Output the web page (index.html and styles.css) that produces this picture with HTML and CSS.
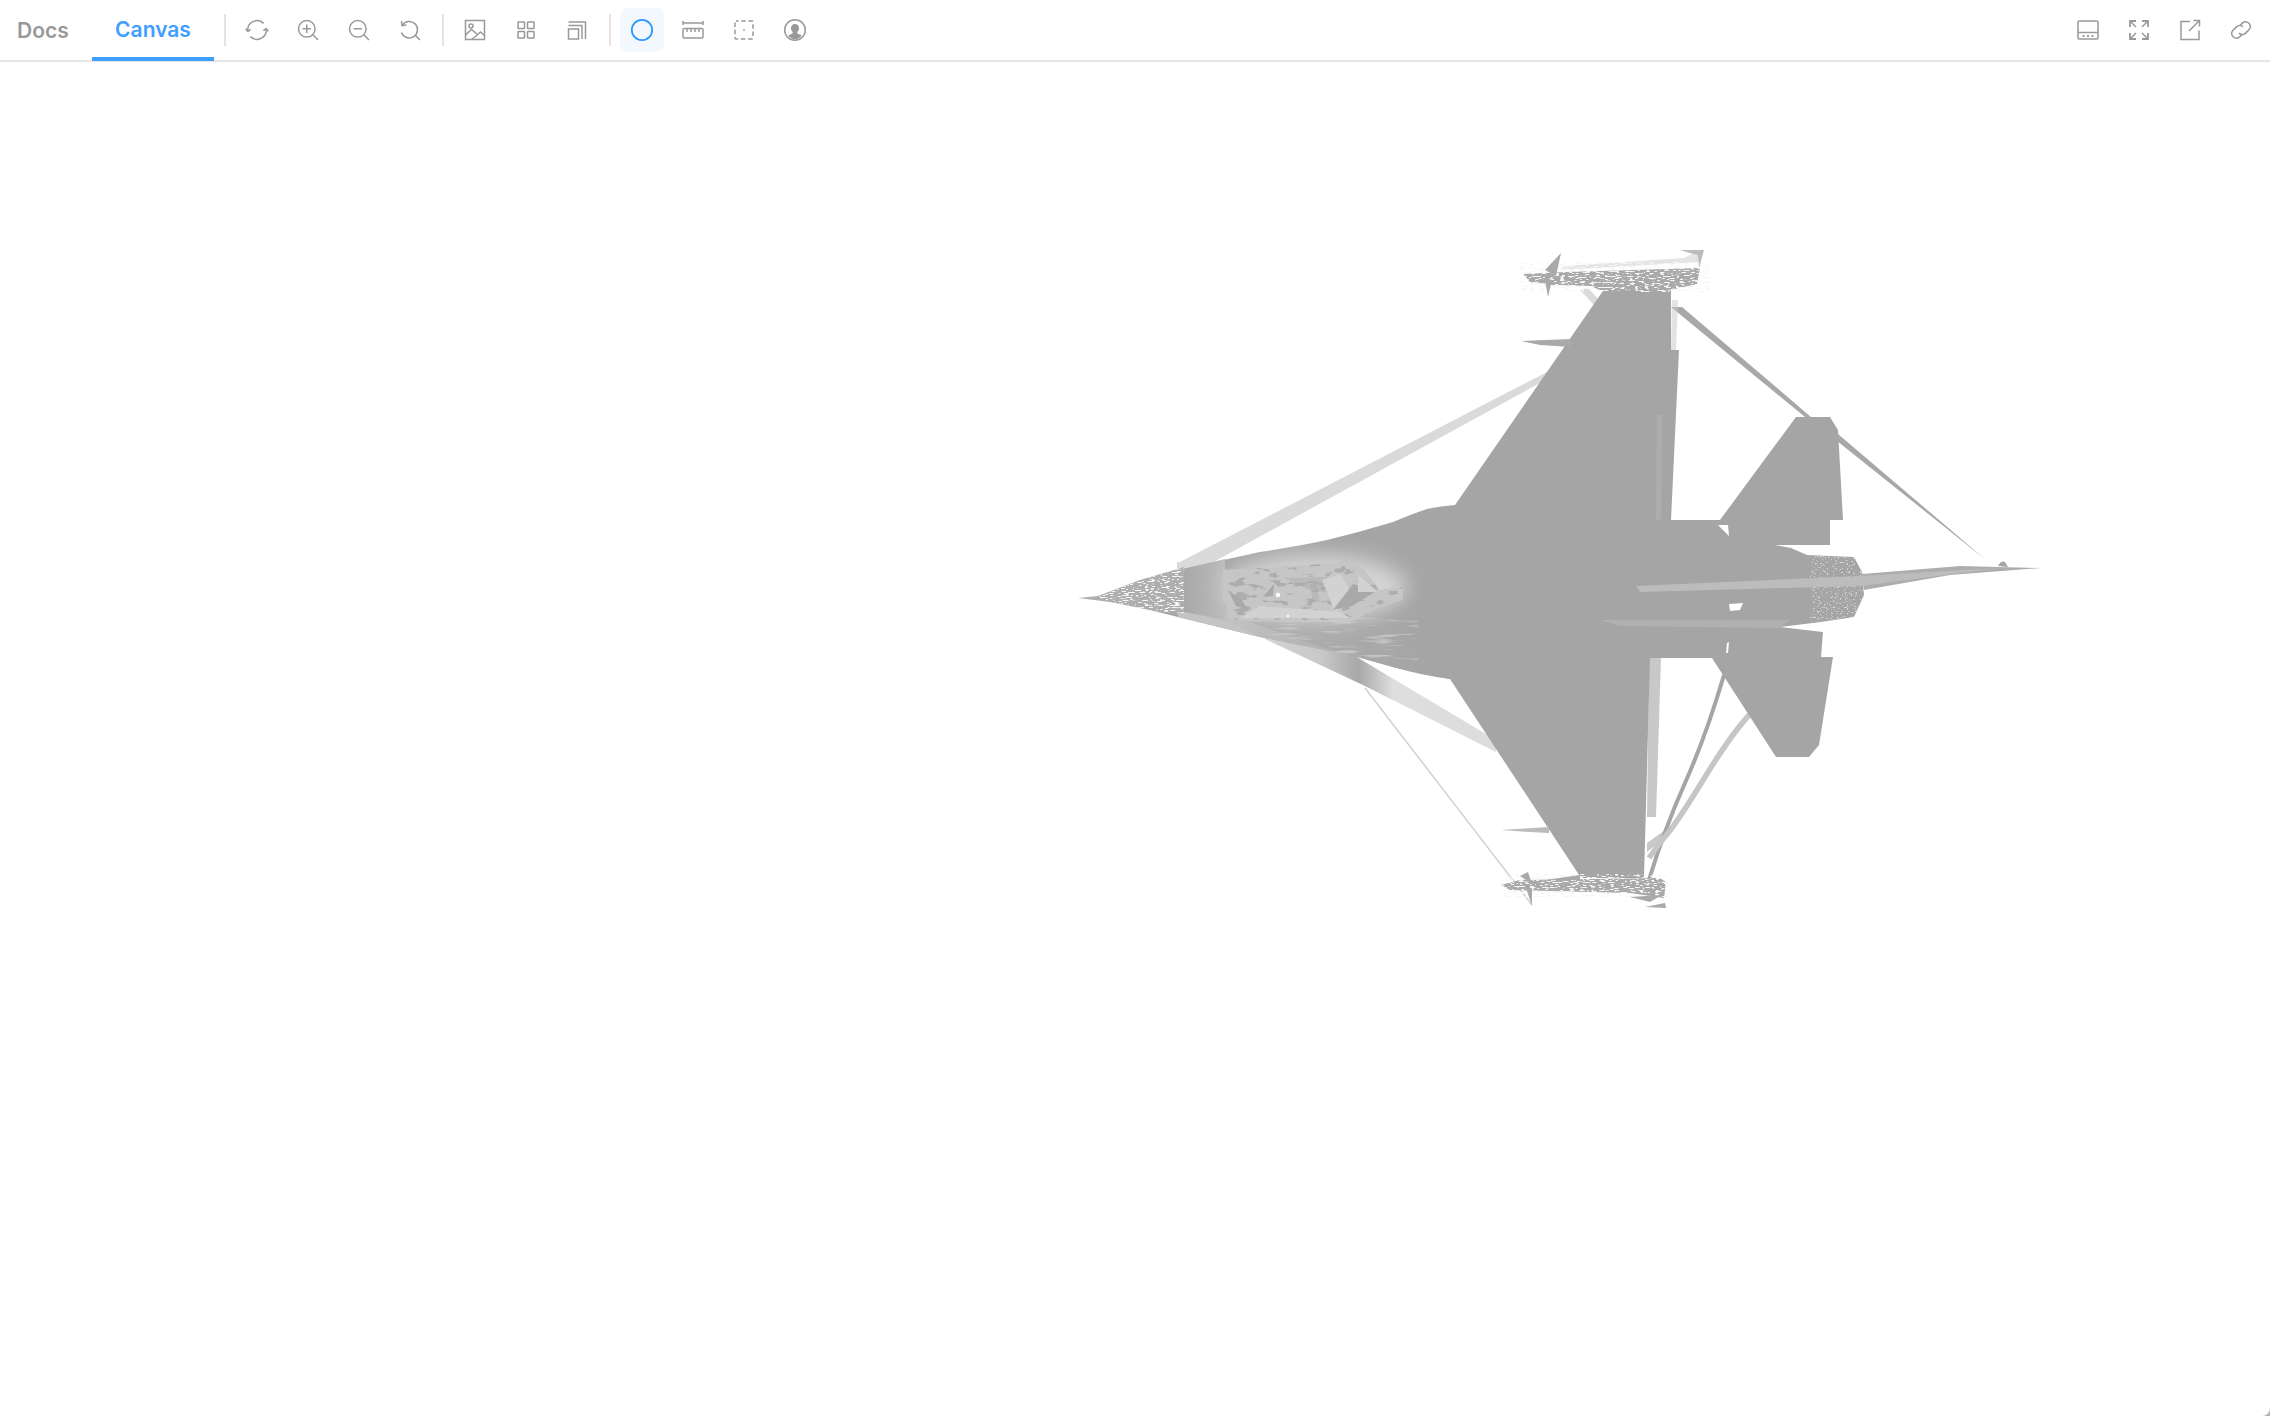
FILE: index.html
```html
<!DOCTYPE html>
<html lang="en">
<head>
<meta charset="utf-8">
<title>Canvas</title>
<link rel="stylesheet" href="styles.css">
</head>
<body>
<div class="app">
  <header class="toolbar">
    <nav class="tabs">
      <a class="tab tab-docs">Docs</a>
      <a class="tab tab-active">Canvas</a>
    </nav>
    <span class="divider"></span>
    <div class="group">
      <button class="btn"><svg class="icon" viewBox="0 0 24 24"><path d="M2.800 13A9.300 9.300 0 0 1 18.600 5.400M21.200 11A9.300 9.300 0 0 1 5.400 18.600"/><path d="M.6 10.800l2.300 2.700 2.700-2.200M23.400 13.200l-2.300-2.700-2.700 2.200"/></svg></button>
      <button class="btn"><svg class="icon" viewBox="0 0 24 24"><circle cx="10.800" cy="10.800" r="8.300"/><path d="M16.800 16.800l5.200 5.200M10.800 6.600v8.400M6.600 10.800h8.400"/></svg></button>
      <button class="btn"><svg class="icon" viewBox="0 0 24 24"><circle cx="10.800" cy="10.800" r="8.300"/><path d="M16.800 16.800l5.200 5.200M6.600 10.800h8.400"/></svg></button>
      <button class="btn"><svg class="icon" viewBox="0 0 24 24"><path d="M4.200 7.200A8.300 8.300 0 1 1 3.400 14.600M16.900 16.900l5.100 5.100"/><path d="M3.400 3.200l.6 4.400 4.400-.5"/></svg></button>
    </div>
    <span class="divider"></span>
    <div class="group">
      <button class="btn"><svg class="icon" viewBox="0 0 24 24"><rect x="2.500" y="2.500" width="19" height="19"/><circle cx="8" cy="8" r="2"/><path d="M2.500 17l6-5.500 6 5 3-2.500 4 3.500M8.500 21.500l6-4.500"/></svg></button>
      <button class="btn"><svg class="icon" viewBox="0 0 24 24"><rect x="4" y="4" width="6.500" height="6.500" rx=".6"/><rect x="13.500" y="4" width="6.500" height="6.500" rx=".6"/><rect x="4" y="13.500" width="6.500" height="6.500" rx=".6"/><rect x="13.500" y="13.500" width="6.500" height="6.500" rx=".6"/></svg></button>
      <button class="btn"><svg class="icon" viewBox="0 0 24 24"><rect x="3.500" y="11" width="10" height="10"/><path d="M3.500 7.500h13.500v13.500M3.500 4h17v17"/></svg></button>
    </div>
    <span class="divider"></span>
    <div class="group">
      <button class="btn btn-active"><svg class="icon icon-active" viewBox="0 0 24 24"><circle cx="12" cy="12" r="10.200"/></svg></button>
      <button class="btn"><svg class="icon" viewBox="0 0 24 24"><path d="M2 3v4M22 3v4M2 5h20"/><rect x="2" y="10.500" width="20" height="9.500" rx="1"/><path d="M6 11v3M10 11v3M14 11v3M18 11v3"/></svg></button>
      <button class="btn"><svg class="icon" viewBox="0 0 24 24"><rect x="3" y="3" width="18" height="18" rx="1" class="dash"/><circle cx="12" cy="12" r=".9" class="dot"/></svg></button>
      <button class="btn"><svg class="icon" viewBox="0 0 24 24"><circle cx="12" cy="12" r="10.300"/><path class="dot" d="M12 6c-2.600 0-4 1.900-4 4.200 0 1.600.7 3 1.700 3.800v1.300l-4.500 2.300A9.400 9.400 0 0 0 12 21.400a9.400 9.400 0 0 0 6.800-3.800l-4.500-2.300V14c1-.8 1.700-2.200 1.700-3.800C16 7.900 14.600 6 12 6z"/></svg></button>
    </div>
    <div class="group group-right">
      <button class="btn"><svg class="icon" viewBox="0 0 24 24"><rect x="2" y="3" width="20" height="18" rx="1"/><path d="M2 14.500h20"/><path class="dots" d="M6.500 18h2M11 18h2M15.500 18h2"/></svg></button>
      <button class="btn"><svg class="icon" viewBox="0 0 24 24"><path d="M3 3l6 6M21 3l-6 6M3 21l6-6M21 21l-6-6"/><path d="M3 9V3h6M15 3h6v6M3 15v6h6M15 21h6v-6" class="thick"/></svg></button>
      <button class="btn"><svg class="icon" viewBox="0 0 24 24"><path d="M12 3.500H3v18h18v-9"/><path d="M11 13L21.500 2.500M15.500 2.500h6v6"/></svg></button>
      <button class="btn"><svg class="icon" viewBox="0 0 24 24"><path d="M10.500 8l3.100-3.100a4.700 4.700 0 0 1 6.600 6.600l-3.600 3.600a4.700 4.700 0 0 1-6.600 0"/><path d="M13.500 16l-3.100 3.100a4.700 4.700 0 0 1-6.600-6.600l3.600-3.600a4.700 4.700 0 0 1 6.600 0"/></svg></button>
    </div>
  </header>
  <main class="canvas">
    <svg class="scene" viewBox="0 62 2270 1354" preserveAspectRatio="xMinYMin meet">
      <defs>
        <filter id="soft" x="-5%" y="-5%" width="110%" height="110%"><feGaussianBlur stdDeviation=".7"/></filter>
        <filter id="glow" x="-30%" y="-60%" width="160%" height="220%"><feGaussianBlur stdDeviation="10"/></filter>
        <filter id="speck" x="0" y="0" width="100%" height="100%">
          <feTurbulence type="fractalNoise" baseFrequency=".45 .8" numOctaves="2" seed="7"/>
          <feColorMatrix values="0 0 0 0 0  0 0 0 0 0  0 0 0 0 0  11 0 0 0 -6.600"/>
          <feComposite in="SourceGraphic" operator="in"/>
        </filter>
        <filter id="speck-dense" x="0" y="0" width="100%" height="100%">
          <feTurbulence type="fractalNoise" baseFrequency=".2 .8" numOctaves="2" seed="11"/>
          <feColorMatrix values="0 0 0 0 0  0 0 0 0 0  0 0 0 0 0  11 0 0 0 -6"/>
          <feComposite in="SourceGraphic" operator="in"/>
        </filter>
        <filter id="streak" x="0" y="0" width="100%" height="100%">
          <feTurbulence type="fractalNoise" baseFrequency=".025 .3" numOctaves="2" seed="4"/>
          <feColorMatrix values="0 0 0 0 0  0 0 0 0 0  0 0 0 0 0  6 0 0 0 -3.400"/>
          <feComposite in="SourceGraphic" operator="in"/>
        </filter>
        <filter id="shard" x="0" y="0" width="100%" height="100%">
          <feTurbulence type="fractalNoise" baseFrequency=".06 .16" numOctaves="3" seed="21"/>
          <feColorMatrix values="0 0 0 0 0  0 0 0 0 0  0 0 0 0 0  14 0 0 0 -8.300"/>
          <feComposite in="SourceGraphic" operator="in"/>
        </filter>
        <linearGradient id="band" gradientUnits="userSpaceOnUse" x1="1263" y1="0" x2="1496" y2="0">
          <stop offset="0" stop-color="#d4d4d4"/><stop offset=".25" stop-color="#c8c8c8"/><stop offset=".41" stop-color="#a8a8a8"/><stop offset=".56" stop-color="#dedede"/><stop offset="1" stop-color="#dcdcdc"/>
        </linearGradient>
        <linearGradient id="belly" gradientUnits="userSpaceOnUse" x1="1178" y1="0" x2="1420" y2="0">
          <stop offset="0" stop-color="#c8c8c8"/><stop offset=".55" stop-color="#b4b4b4"/><stop offset="1" stop-color="#a5a5a5"/>
        </linearGradient>
        <linearGradient id="radome" gradientUnits="userSpaceOnUse" x1="1184" y1="0" x2="1225" y2="0">
          <stop offset="0" stop-color="#a8a8a8"/><stop offset="1" stop-color="#bbb"/>
        </linearGradient>
        <clipPath id="hull"><path d="M1178 570L1260 552 1327 540 1393 522 1427 509 1455 505 1500 505 1500 680 1450 679 1393 667 1350 655 1260 637 1178 617Z"/></clipPath>
        <clipPath id="nozzle"><path d="M1810 553L1854 557 1862 572 1864 595 1854 617 1821 622 1810 622Z"/></clipPath>
        <clipPath id="cockpit"><path d="M1223 570L1357 562 1380 590 1403 586 1403 600 1380 607 1355 620 1230 620 1223 600Z"/></clipPath>
        <clipPath id="noseclip"><path d="M1098 597L1140 580 1184 567 1184 614 1150 610 1110 602Z"/></clipPath>
      </defs>
      <g filter="url(#soft)">
        <!-- struts behind the airframe -->
        <path class="s-light" d="M1178 563L1547 372 1549 378 1208 565 1178 572Z"/>
        <path class="s-light" d="M1580 290L1588 288 1600 301 1594 305Z"/>
        <path fill="url(#band)" d="M1263 638L1365 686 1496 752 1496 740 1350 653Z"/>
        <path class="s-thin" d="M1365 688L1532 905"/>
        <path class="s-mid" d="M1671 307L1682 307 1811 417 1805 417Z"/>
        <path class="s-mid" d="M1838 434L1986 560 1837 441Z"/>
        <path class="s-pale" d="M1649 658L1661 658 1656 817 1647 817Z"/>
        <path class="s-pale" d="M1647 843L1668 828 1662 840 1647 852Z"/>
        <path class="s-dark" d="M1649 880Q1664 830 1685 783T1724 675"/>
        <path class="s-pale-line" d="M1649 858Q1658 845 1668 833T1705 777 1751 713"/>
        <path class="s-pale s-half" d="M1672 300L1678 300 1676 350 1671 350Z"/>
        <!-- airframe -->
        <path class="hull" fill-rule="evenodd" d="M1098 597L1178 570 1260 552Q1300 546 1327 540 1360 532 1393 522 1412 514 1427 509 1440 506 1455 505L1605 288 1671 288 1671 350 1679 350 1671 520 1720 520 1796 417 1830 417 1838 430 1843 520 1830 520 1830 545 1775 545 1791 548 1807 555 1854 557 1862 572 1864 595 1854 617 1821 622 1780 627 1823 632 1821 657 1833 657 1819 745 1809 757 1776 757 1712 658 1650 658 1644 878 1581 878 1450 679Q1420 675 1393 667 1370 660 1350 655L1260 637 1178 617ZM1718 525L1728 525 1729 536ZM1729 604L1743 603 1740 610 1730 611ZM1727 643L1729 642 1728 653 1726 653Z"/>
        <path class="hull-lite" d="M1657 415L1662 415 1661 520 1656 520Z"/>
        <!-- exhaust noise -->
        <g clip-path="url(#nozzle)"><rect x="1810" y="552" width="56" height="72" class="speck-g" filter="url(#speck)"/></g>
        <!-- tail boom -->
        <path class="boom" d="M1862 574L1960 566 2041 568 1950 575 1864 590Z"/>
        <path class="boom-lite" d="M1636 586L1860 576 2000 568 1860 586 1640 592Z"/>
        <path class="hull" d="M1998 566q3-6 7-4l3 5Z"/>
        <path class="boom-faint" d="M1600 620L1790 620 1780 628 1620 626Z"/>
        <!-- belly and radome -->
        <path fill="url(#belly)" d="M1178 606L1400 620 1450 679 1393 667 1350 655 1260 637 1178 617Z"/>
        <path class="hull-fade" d="M1250 622L1420 624 1450 679 1393 667 1350 655 1300 640Z"/>
        <rect x="1178" y="618" width="240" height="42" class="streak-w" filter="url(#streak)" clip-path="url(#hull)"/>
        <path fill="url(#radome)" d="M1184 569L1225 559 1225 620 1184 612Z"/>
        <!-- glow and canopy -->
        <g clip-path="url(#hull)"><ellipse cx="1315" cy="587" rx="92" ry="33" class="glow" filter="url(#glow)"/></g>
        <path class="canopy" d="M1223 570L1357 562 1366 572 1380 590 1403 586 1403 600 1380 607 1355 620 1230 620 1223 600Z"/>
        <g clip-path="url(#cockpit)">
          <rect x="1223" y="560" width="182" height="62" class="shard-l" filter="url(#shard)"/>
        </g>
        <path class="sh-d" d="M1263 597L1274 584 1273 596Z"/>
        <path class="sh-d" d="M1228 590L1242 600 1248 610 1236 606Z"/>
        <path class="sh-d sh-faint" d="M1284 578L1336 577 1350 596 1310 590Z"/>
        <path class="sh-l" d="M1322 580L1340 574 1356 600 1335 612Z"/>
        <path class="sh-d" d="M1333 610L1353 584 1378 590 1352 606Z"/>
        <path class="sh-l" d="M1358 575L1378 592 1358 592Z"/>
        <path class="sh-l" d="M1260 606L1340 612 1350 618 1240 618Z"/>
        <path class="sh-d sh-faint" d="M1310 584L1316 583 1320 602 1313 602Z"/>
        <circle cx="1278" cy="595" r="2.200" class="spark"/>
        <circle cx="1288" cy="616" r="1.200" class="spark"/>
        <!-- nose -->
        <path class="nose" d="M1078 598L1098 596 1140 580 1184 567 1184 614 1150 610 1110 602Z"/>
        <g clip-path="url(#noseclip)"><rect x="1098" y="568" width="86" height="46" class="speck-w" filter="url(#speck-dense)"/></g>
        <path class="nose-lo" d="M1178 612L1230 622 1260 637 1178 617Z"/>
        <path class="s-light" d="M1177 562h2v8h-2z"/>
        <!-- upper wingtip missile -->
        <path class="m-faint" d="M1560 270L1700 262 1702 252 1682 251 1692 254 1684 258 1565 266Z"/>
        <path class="m" d="M1523 274L1565 272 1700 268 1697 284 1670 290 1600 290 1590 286 1550 285 1530 282Z"/>
        <rect x="1520" y="262" width="190" height="30" class="speck-w" filter="url(#speck-dense)"/>
        <path class="m" d="M1545 270L1561 253 1556 276Z"/>
        <path class="m" d="M1545 280L1552 280 1548 297Z"/>
        <path class="m-mid" d="M1680 250L1704 250 1699 268 1698 255Z"/>
        <path class="m" d="M1521 341L1571 339 1571 347 1540 345Z"/>
        <!-- lower wingtip missile -->
        <path class="m" d="M1501 885L1520 880 1660 878 1666 882 1664 898 1630 893 1510 890Z"/>
        <rect x="1500" y="874" width="168" height="24" class="speck-w" filter="url(#speck-dense)"/>
        <path class="m" d="M1520 876L1528 872 1532 884Z"/>
        <path class="m" d="M1526 888L1532 888 1532 906Z"/>
        <path class="m" d="M1545 880L1580 875 1580 880Z"/>
        <path class="m" d="M1630 897L1662 895 1650 902Z"/>
        <path class="m" d="M1645 907L1665 903 1666 908Z"/>
        <path class="m-mid" d="M1501 830L1549 827 1549 833 1530 832Z"/>
      </g>
    </svg>
  </main>
</div>
</body>
</html>
```
FILE: styles.css
```css
* { box-sizing: border-box; }
html, body { margin: 0; height: 100%; background: #b4b4b4; }
body { font-family: Inter, "Liberation Sans", sans-serif; }
.app { height: 100%; display: flex; flex-direction: column; background: #fff; border-bottom-right-radius: 8px; overflow: hidden; }
.toolbar { flex: none; height: 62px; display: flex; align-items: center; border-bottom: 2px solid #e6e6e6; }
.tabs { display: flex; align-self: stretch; height: 62px; }
.tab { display: flex; align-items: center; font-size: 21px; font-weight: 600; height: 61px; }
.tab-docs { color: #999; width: 92px; padding: 0 0 1px 17px; }
.tab-active { color: #409eff; width: 122px; justify-content: center; padding: 3px 0 1px; border-bottom: 4px solid #409eff; }
.divider { flex: none; width: 2px; height: 32px; margin: 0 9px 0 10px; background: #e4e4e4; }
.group { display: flex; gap: 7px; }
.group-right { margin-left: auto; margin-right: 7px; }
.btn { width: 44px; height: 44px; padding: 0; border: 0; border-radius: 8px; background: none; display: flex; align-items: center; justify-content: center; }
.btn-active { background: #f3f8ff; }
.icon { width: 24px; height: 24px; fill: none; stroke: #999; stroke-width: 1.500; display: block; }
.icon-active { stroke: #2a97ff; stroke-width: 1.800; }
.dash { stroke-dasharray: 4.500 2.750; stroke-dashoffset: 2; }
.dot { fill: #999; stroke: none; }
.dots { stroke-width: 2; }
.thick { stroke-width: 1.800; }
.canvas { flex: 1; min-height: 0; position: relative; }
.scene { position: absolute; inset: 0; width: 100%; height: 100%; display: block; }
.hull { fill: #a5a5a5; }
.hull-lite { fill: #adadad; }
.hull-fade { fill: #a5a5a5; opacity: .55; }
.boom { fill: #adadad; }
.boom-lite { fill: #bcbcbc; }
.boom-faint { fill: #b0b0b0; }
.s-light { fill: #dadada; }
.s-thin { fill: none; stroke: #cfcfcf; stroke-width: 1.400; }
.s-mid { fill: #a8a8a8; }
.s-pale { fill: #c8c8c8; }
.s-half { opacity: .5; }
.s-dark { fill: none; stroke: #a5a5a5; stroke-width: 4; }
.s-pale-line { fill: none; stroke: #c6c6c6; stroke-width: 5.500; }
.speck-w { fill: #f6f6f6; }
.speck-g { fill: #d8d8d8; }
.streak-w { fill: #c6c6c6; }
.glow { fill: #d4d4d4; }
.canopy { fill: #c6c6c6; }
.shard-l { fill: #adadad; }
.sh-l { fill: #d2d2d2; }
.sh-d { fill: #a9a9a9; }
.sh-faint { opacity: .45; }
.spark { fill: #fff; }
.nose { fill: #aeaeae; }
.nose-lo { fill: #c4c4c4; }
.m { fill: #a9a9a9; }
.m-mid { fill: #bbb; }
.m-faint { fill: #e4e4e4; }
```
